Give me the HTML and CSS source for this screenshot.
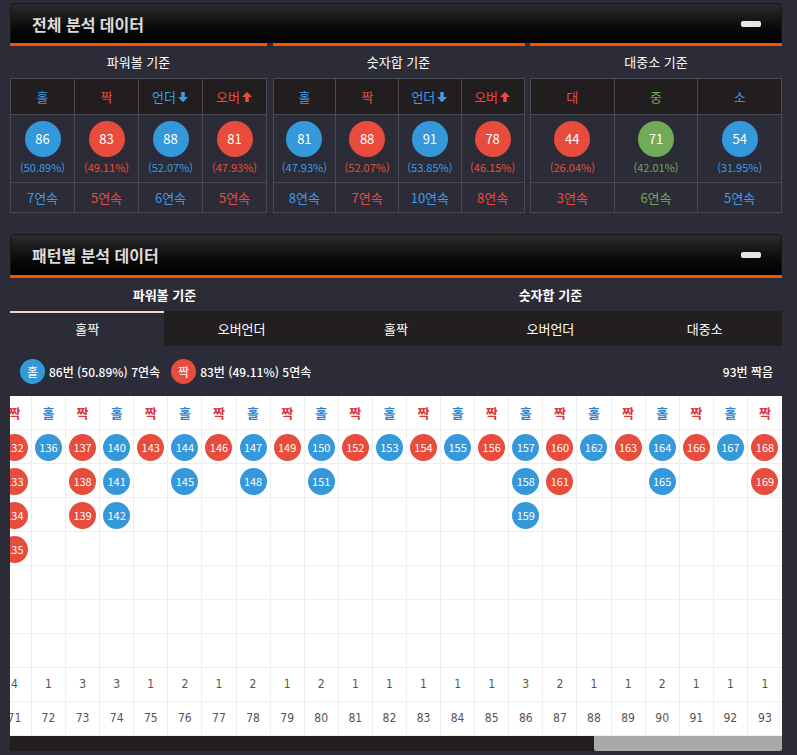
FILE: index.html
```html
<!DOCTYPE html>
<html lang="ko">
<head>
<meta charset="utf-8">
<title>분석 데이터</title>
<link rel="stylesheet" href="styles.css">
</head>
<body>
<div class="page">
  <section class="sec">
    <div class="head"><h2>전체 분석 데이터</h2><span class="minus"></span></div>
    <div class="stats">
      <div class="grp">
        <div class="bar"></div>
        <div class="sub">파워볼 기준</div>
        <table class="t">
          <tr><th class="blue">홀</th><th class="red">짝</th><th class="blue">언더<svg class="ar" viewBox="0 0 12 12"><path d="M4.2 1h3.6v5h3.2L6 11.2 1 6h3.2z" fill="#3d9be9"/></svg></th><th class="red">오버<svg class="ar" viewBox="0 0 12 12"><path d="M4.2 11h3.6V6h3.2L6 .8 1 6h3.2z" fill="#e74c3c"/></svg></th></tr>
          <tr><td class="bc"><div class="ball bb">86</div><div class="pc blue">(50.89%)</div></td><td class="bc"><div class="ball rb">83</div><div class="pc red">(49.11%)</div></td><td class="bc"><div class="ball bb">88</div><div class="pc blue">(52.07%)</div></td><td class="bc"><div class="ball rb">81</div><div class="pc red">(47.93%)</div></td></tr>
          <tr><td class="cc blue">7연속</td><td class="cc red">5연속</td><td class="cc blue">6연속</td><td class="cc red">5연속</td></tr>
        </table>
      </div>
      <div class="grp">
        <div class="bar"></div>
        <div class="sub">숫자합 기준</div>
        <table class="t">
          <tr><th class="blue">홀</th><th class="red">짝</th><th class="blue">언더<svg class="ar" viewBox="0 0 12 12"><path d="M4.2 1h3.6v5h3.2L6 11.2 1 6h3.2z" fill="#3d9be9"/></svg></th><th class="red">오버<svg class="ar" viewBox="0 0 12 12"><path d="M4.2 11h3.6V6h3.2L6 .8 1 6h3.2z" fill="#e74c3c"/></svg></th></tr>
          <tr><td class="bc"><div class="ball bb">81</div><div class="pc blue">(47.93%)</div></td><td class="bc"><div class="ball rb">88</div><div class="pc red">(52.07%)</div></td><td class="bc"><div class="ball bb">91</div><div class="pc blue">(53.85%)</div></td><td class="bc"><div class="ball rb">78</div><div class="pc red">(46.15%)</div></td></tr>
          <tr><td class="cc blue">8연속</td><td class="cc red">7연속</td><td class="cc blue">10연속</td><td class="cc red">8연속</td></tr>
        </table>
      </div>
      <div class="grp">
        <div class="bar"></div>
        <div class="sub">대중소 기준</div>
        <table class="t">
          <tr><th class="red">대</th><th class="green">중</th><th class="blue">소</th></tr>
          <tr><td class="bc"><div class="ball rb">44</div><div class="pc red">(26.04%)</div></td><td class="bc"><div class="ball gb">71</div><div class="pc green">(42.01%)</div></td><td class="bc"><div class="ball bb">54</div><div class="pc blue">(31.95%)</div></td></tr>
          <tr><td class="cc red">3연속</td><td class="cc green">6연속</td><td class="cc blue">5연속</td></tr>
        </table>
      </div>
    </div>
  </section>

  <section class="sec sec2">
    <div class="head"><h2>패턴별 분석 데이터</h2><span class="minus"></span></div>
    <div class="bar"></div>
    <div class="tabs1"><div>파워볼 기준</div><div>숫자합 기준</div></div>
    <div class="tabs2"><div class="tab on">홀짝</div><div class="tab">오버언더</div><div class="tab">홀짝</div><div class="tab">오버언더</div><div class="tab">대중소</div></div>
    <div class="legend">
      <span class="lc bb">홀</span><span class="lt">86번 (50.89%) 7연속</span>
      <span class="lc rb l2">짝</span><span class="lt">83번 (49.11%) 5연속</span>
      <span class="lr">93번 짝음</span>
    </div>
    <div class="gv">
      <div class="gc"><div class="hd j">짝</div><div class="balls"><div class="slot"><span class="gball rb">132</span></div><div class="slot"><span class="gball rb">133</span></div><div class="slot"><span class="gball rb">134</span></div><div class="slot"><span class="gball rb">135</span></div></div><div class="n">4</div><div class="n">71</div></div>
      <div class="gc"><div class="hd h">홀</div><div class="balls"><div class="slot"><span class="gball bb">136</span></div></div><div class="n">1</div><div class="n">72</div></div>
      <div class="gc"><div class="hd j">짝</div><div class="balls"><div class="slot"><span class="gball rb">137</span></div><div class="slot"><span class="gball rb">138</span></div><div class="slot"><span class="gball rb">139</span></div></div><div class="n">3</div><div class="n">73</div></div>
      <div class="gc"><div class="hd h">홀</div><div class="balls"><div class="slot"><span class="gball bb">140</span></div><div class="slot"><span class="gball bb">141</span></div><div class="slot"><span class="gball bb">142</span></div></div><div class="n">3</div><div class="n">74</div></div>
      <div class="gc"><div class="hd j">짝</div><div class="balls"><div class="slot"><span class="gball rb">143</span></div></div><div class="n">1</div><div class="n">75</div></div>
      <div class="gc"><div class="hd h">홀</div><div class="balls"><div class="slot"><span class="gball bb">144</span></div><div class="slot"><span class="gball bb">145</span></div></div><div class="n">2</div><div class="n">76</div></div>
      <div class="gc"><div class="hd j">짝</div><div class="balls"><div class="slot"><span class="gball rb">146</span></div></div><div class="n">1</div><div class="n">77</div></div>
      <div class="gc"><div class="hd h">홀</div><div class="balls"><div class="slot"><span class="gball bb">147</span></div><div class="slot"><span class="gball bb">148</span></div></div><div class="n">2</div><div class="n">78</div></div>
      <div class="gc"><div class="hd j">짝</div><div class="balls"><div class="slot"><span class="gball rb">149</span></div></div><div class="n">1</div><div class="n">79</div></div>
      <div class="gc"><div class="hd h">홀</div><div class="balls"><div class="slot"><span class="gball bb">150</span></div><div class="slot"><span class="gball bb">151</span></div></div><div class="n">2</div><div class="n">80</div></div>
      <div class="gc"><div class="hd j">짝</div><div class="balls"><div class="slot"><span class="gball rb">152</span></div></div><div class="n">1</div><div class="n">81</div></div>
      <div class="gc"><div class="hd h">홀</div><div class="balls"><div class="slot"><span class="gball bb">153</span></div></div><div class="n">1</div><div class="n">82</div></div>
      <div class="gc"><div class="hd j">짝</div><div class="balls"><div class="slot"><span class="gball rb">154</span></div></div><div class="n">1</div><div class="n">83</div></div>
      <div class="gc"><div class="hd h">홀</div><div class="balls"><div class="slot"><span class="gball bb">155</span></div></div><div class="n">1</div><div class="n">84</div></div>
      <div class="gc"><div class="hd j">짝</div><div class="balls"><div class="slot"><span class="gball rb">156</span></div></div><div class="n">1</div><div class="n">85</div></div>
      <div class="gc"><div class="hd h">홀</div><div class="balls"><div class="slot"><span class="gball bb">157</span></div><div class="slot"><span class="gball bb">158</span></div><div class="slot"><span class="gball bb">159</span></div></div><div class="n">3</div><div class="n">86</div></div>
      <div class="gc"><div class="hd j">짝</div><div class="balls"><div class="slot"><span class="gball rb">160</span></div><div class="slot"><span class="gball rb">161</span></div></div><div class="n">2</div><div class="n">87</div></div>
      <div class="gc"><div class="hd h">홀</div><div class="balls"><div class="slot"><span class="gball bb">162</span></div></div><div class="n">1</div><div class="n">88</div></div>
      <div class="gc"><div class="hd j">짝</div><div class="balls"><div class="slot"><span class="gball rb">163</span></div></div><div class="n">1</div><div class="n">89</div></div>
      <div class="gc"><div class="hd h">홀</div><div class="balls"><div class="slot"><span class="gball bb">164</span></div><div class="slot"><span class="gball bb">165</span></div></div><div class="n">2</div><div class="n">90</div></div>
      <div class="gc"><div class="hd j">짝</div><div class="balls"><div class="slot"><span class="gball rb">166</span></div></div><div class="n">1</div><div class="n">91</div></div>
      <div class="gc"><div class="hd h">홀</div><div class="balls"><div class="slot"><span class="gball bb">167</span></div></div><div class="n">1</div><div class="n">92</div></div>
      <div class="gc"><div class="hd j">짝</div><div class="balls"><div class="slot"><span class="gball rb">168</span></div><div class="slot"><span class="gball rb">169</span></div></div><div class="n">1</div><div class="n">93</div></div>
    </div>
    <div class="sb"><div class="thumb"></div></div>
  </section>
</div>
</body>
</html>
```

FILE: styles.css
```css
* { box-sizing: border-box; }
body {
  margin: 0;
  background: #2b2c37;
  font-family: "Noto Sans CJK KR", "Noto Sans", sans-serif;
  color: #fff;
}
.page { padding: 3px 15px 0 10px; }

.head {
  height: 40px;
  display: flex;
  align-items: center;
  justify-content: space-between;
  padding: 0 20px 0 21px;
  background: linear-gradient(#2c2c2e, #080808 65%, #000);
  border: 1px solid #161616;
  border-bottom: none;
  border-radius: 5px 5px 0 0;
}
.head h2 {
  margin: 0;
  font-size: 16px;
  font-weight: 700;
  color: #dcdcdc;
  line-height: 1;
}
.minus { width: 20px; height: 6px; border-radius: 2px; background: #e6e6e6; }
.bar { height: 3px; background: #fa5300; }

.stats {
  display: grid;
  grid-template-columns: 257px 252px 252px;
  column-gap: 5.5px;
}
.sub { height: 32px; line-height: 32px; text-align: center; font-size: 13px; color: #fff; }

.t { width: 100%; border-collapse: collapse; table-layout: fixed; }
.t th, .t td { border: 1px solid #4a4a53; text-align: center; padding: 0; }
.t th { height: 36px; background: #221e1f; font-weight: 400; font-size: 13px; }
.t td.bc { height: 68px; vertical-align: top; padding-top: 6px; }
.t td.cc { height: 30px; font-size: 13px; }
.ar { width: 12px; height: 12px; vertical-align: -1px; margin-left: 1px; }

.blue { color: #3d9be9; }
.red { color: #e74c3c; }
.green { color: #6fab52; }

.ball {
  width: 36px; height: 36px; border-radius: 50%;
  margin: 0 auto;
  font-size: 13px; line-height: 36px; color: #fff;
}
.bb { background: #3498db; }
.rb { background: #e74c3c; }
.gb { background: #72ab57; }
.pc { font-size: 11px; line-height: 14px; margin-top: 3px; }

.sec2 { margin-top: 21px; }
.sec2 .head { height: 41px; }
.tabs1 {
  display: grid;
  grid-template-columns: 2fr 3fr;
  height: 33px;
  line-height: 33px;
  text-align: center;
  font-size: 13px;
  font-weight: 700;
}
.tabs2 {
  display: grid;
  grid-template-columns: repeat(5, 1fr);
  height: 35px;
  background: #231f20;
}
.tab { line-height: 35px; text-align: center; font-size: 13px; }
.tab.on { background: #2b2c37; border-top: 2px solid #fcd3c1; line-height: 31px; }

.legend {
  height: 50px;
  display: flex;
  align-items: center;
  padding: 0 9px 0 10px;
  font-size: 12px;
  font-weight: 500;
}
.lc {
  width: 25px; height: 25px; border-radius: 50%;
  display: flex; align-items: center; justify-content: center;
  font-size: 12px; font-weight: 400;
}
.lt { margin-left: 4px; }
.l2 { margin-left: 11px; }
.lr { margin-left: auto; }

.gv {
  height: 340px;
  background: #fff;
  display: flex;
  justify-content: flex-end;
  overflow: hidden;
}
.gc {
  flex: 0 0 34.1px;
  border-right: 1px solid #eee;
  background: repeating-linear-gradient(to bottom, transparent 0 33px, #eee 33px 34px);
}
.gc:last-child { border-right: none; }
.hd { height: 34px; line-height: 34px; text-align: center; font-size: 13px; font-weight: 700; }
.hd.j { color: #d9363e; }
.hd.h { color: #2f80cf; }
.balls { height: 238px; }
.slot { height: 34px; display: flex; align-items: center; justify-content: center; }
.gball {
  flex: none;
  width: 27px; height: 27px; border-radius: 50%;
  font-size: 11px; line-height: 27px; text-align: center; color: #fff;
}
.n {
  height: 34px; line-height: 33px; text-align: center;
  font-family: "DejaVu Sans Condensed", "Liberation Sans", sans-serif;
  font-size: 12px; color: #555;
}

.sb { height: 15px; background: #231f20; display: flex; justify-content: flex-end; }
.thumb { width: 188px; background: #a9a9a9; border-radius: 0 0 2px 2px; }
```
